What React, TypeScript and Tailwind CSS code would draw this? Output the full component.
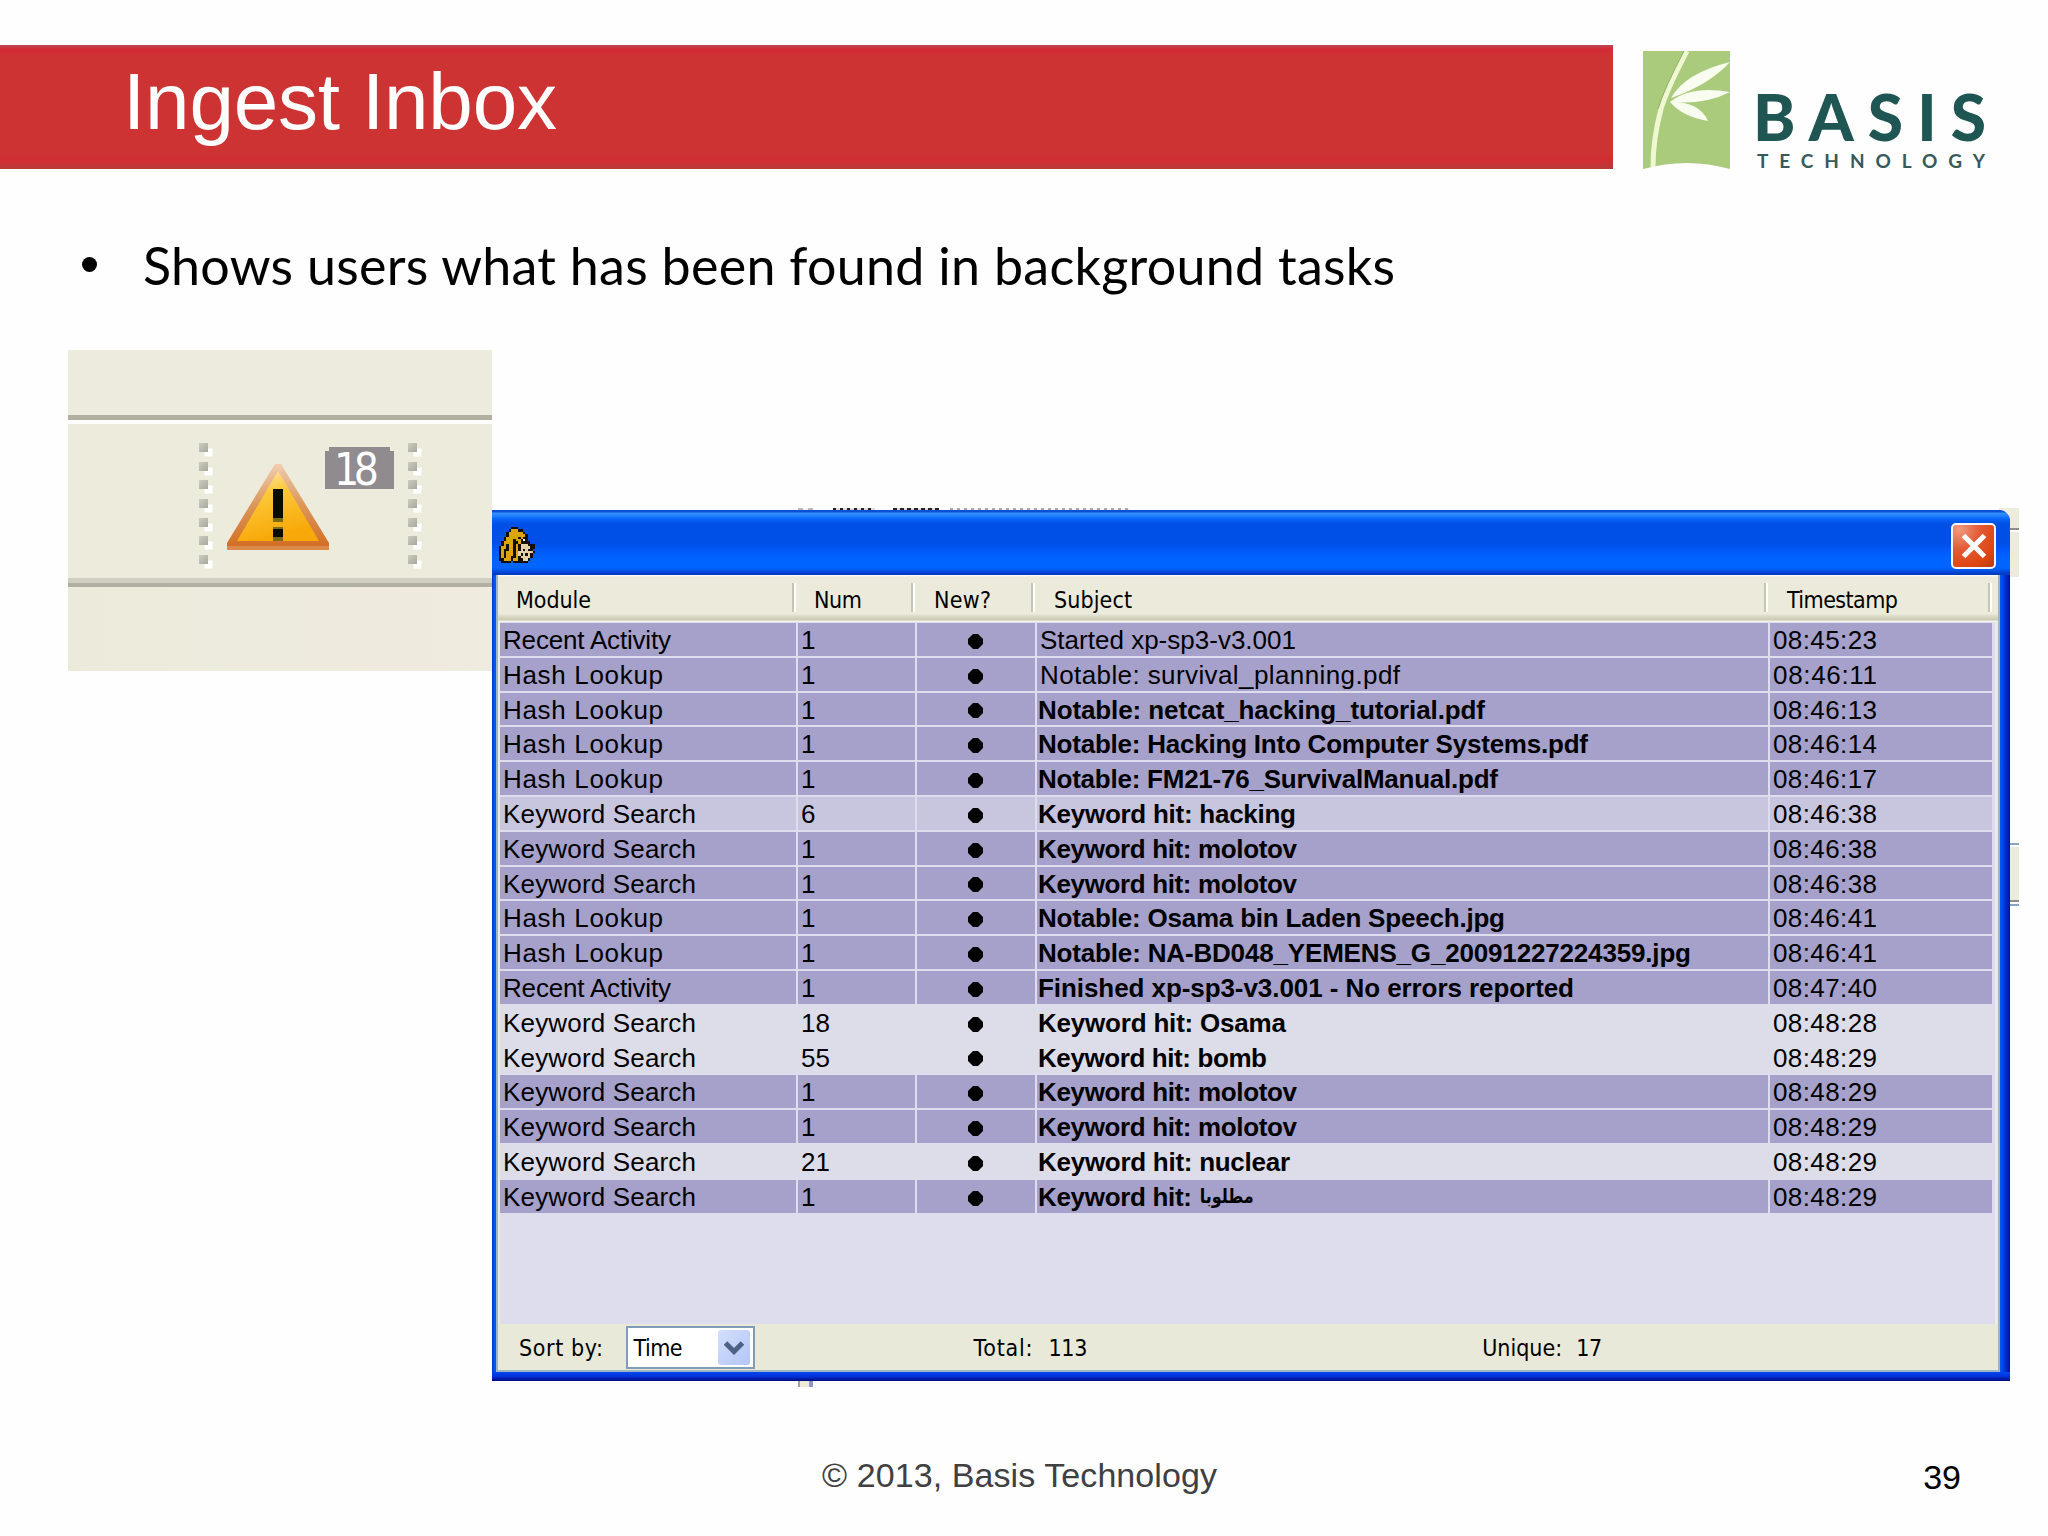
import { useLayoutEffect, useRef, useState } from "react";
import clsx from "clsx";

type Shade = "dark" | "mid" | "light";

interface Message {
  module: string;
  num: number;
  subject: string;
  width: number;
  time: string;
  shade: Shade;
  read?: boolean;
  arabic?: string;
}

const messages: Message[] = [
  { module: "Recent Activity", num: 1, subject: "Started xp-sp3-v3.001", width: 256, time: "08:45:23", shade: "dark", read: true },
  { module: "Hash Lookup", num: 1, subject: "Notable: survival_planning.pdf", width: 360, time: "08:46:11", shade: "dark", read: true },
  { module: "Hash Lookup", num: 1, subject: "Notable: netcat_hacking_tutorial.pdf", width: 447, time: "08:46:13", shade: "dark" },
  { module: "Hash Lookup", num: 1, subject: "Notable: Hacking Into Computer Systems.pdf", width: 550, time: "08:46:14", shade: "dark" },
  { module: "Hash Lookup", num: 1, subject: "Notable: FM21-76_SurvivalManual.pdf", width: 460, time: "08:46:17", shade: "dark" },
  { module: "Keyword Search", num: 6, subject: "Keyword hit: hacking", width: 258, time: "08:46:38", shade: "mid" },
  { module: "Keyword Search", num: 1, subject: "Keyword hit: molotov", width: 259, time: "08:46:38", shade: "dark" },
  { module: "Keyword Search", num: 1, subject: "Keyword hit: molotov", width: 259, time: "08:46:38", shade: "dark" },
  { module: "Hash Lookup", num: 1, subject: "Notable: Osama bin Laden Speech.jpg", width: 467, time: "08:46:41", shade: "dark" },
  { module: "Hash Lookup", num: 1, subject: "Notable: NA-BD048_YEMENS_G_20091227224359.jpg", width: 653, time: "08:46:41", shade: "dark" },
  { module: "Recent Activity", num: 1, subject: "Finished xp-sp3-v3.001 - No errors reported", width: 536, time: "08:47:40", shade: "dark" },
  { module: "Keyword Search", num: 18, subject: "Keyword hit: Osama", width: 248, time: "08:48:28", shade: "light" },
  { module: "Keyword Search", num: 55, subject: "Keyword hit: bomb", width: 229, time: "08:48:29", shade: "light" },
  { module: "Keyword Search", num: 1, subject: "Keyword hit: molotov", width: 259, time: "08:48:29", shade: "dark" },
  { module: "Keyword Search", num: 1, subject: "Keyword hit: molotov", width: 259, time: "08:48:29", shade: "dark" },
  { module: "Keyword Search", num: 21, subject: "Keyword hit: nuclear", width: 252, time: "08:48:29", shade: "light" },
  { module: "Keyword Search", num: 1, subject: "Keyword hit:", width: 154, time: "08:48:29", shade: "dark", arabic: "مطلوبا" },
];

const moduleWidths: Record<string, number> = {
  "Recent Activity": 168,
  "Hash Lookup": 160,
  "Keyword Search": 193,
};

const shades: Record<Shade, string> = {
  dark: "bg-[#a5a1cb]",
  mid: "bg-[#c8c6df]",
  light: "bg-[#dddde9]",
};

const columns = [
  { label: "Module", width: 75, pad: "pl-[16px]" },
  { label: "Num", width: 48, pad: "pl-[16px]" },
  { label: "New?", width: 57, pad: "pl-[17px]" },
  { label: "Subject", width: 78, pad: "pl-[17px]" },
  { label: "Timestamp", width: 111, pad: "pl-[17px]" },
];

// Spreads the letters so that the text takes exactly the given width.
function FitText({ text, width, className }: { text: string; width: number; className?: string }) {
  const ref = useRef<HTMLSpanElement>(null);
  const [spacing, setSpacing] = useState(0);

  useLayoutEffect(() => {
    if (ref.current && text.length > 1) {
      ref.current.style.letterSpacing = "0px";
      const natural = ref.current.getBoundingClientRect().width;
      const next = (width - natural) / (text.length - 1);
      ref.current.style.letterSpacing = `${next}px`;
      setSpacing(next);
    }
  }, [text, width]);

  return (
    <span ref={ref} className={clsx("inline-block whitespace-pre", className)} style={{ letterSpacing: `${spacing}px` }}>
      {text}
    </span>
  );
}

function BambooMark() {
  return (
    <svg width="88" height="118" viewBox="0 0 88 118" className="block">
      <path d="M0 0H87V118Q44 106 0 118Z" fill="#abcb7c" />
      <path d="M44 0Q24 38 18 58Q10 88 10 116" fill="none" stroke="#eef8d2" strokeWidth="5" />
      <path d="M41 0Q21 38 15 58" fill="none" stroke="#8fb268" strokeWidth="1" />
      <path d="M28 47Q42 22 87 11Q66 34 28 47Z" fill="#f8fdf0" />
      <path d="M27 51Q48 34 87 41Q62 54 27 51Z" fill="#f8fdf0" />
      <path d="M27 51Q56 50 65 70Q40 66 27 51Z" fill="#f8fdf0" />
    </svg>
  );
}

function Logo() {
  return (
    <div className="flex pl-[30px] pt-[6px]">
      <BambooMark />
      <div className="flex flex-col items-start pl-[22px] pt-[36px] font-['Lato']">
        <FitText text="BASIS" width={233} className="h-[63px] shrink-0 text-[64px] leading-[60px] font-black text-[#1f5552]" />
        <FitText text="TECHNOLOGY" width={228} className="ml-[4px] h-[22px] shrink-0 text-[19px] leading-[22px] font-bold text-[#38595b]" />
      </div>
    </div>
  );
}

function DragHandle() {
  return (
    <div className="flex w-[14px] flex-col gap-[9.7px]">
      {Array.from({ length: 7 }, (_, i) => (
        <div key={i} className="h-[9px] w-[9px] bg-gradient-to-br from-[#ccccc2] to-[#a9a89c] shadow-[5px_5px_0_-0.5px_#fff]" />
      ))}
    </div>
  );
}

function WarningIcon() {
  return (
    <svg width="104" height="92" viewBox="0 0 104 92" className="block">
      <defs>
        <linearGradient id="warn" x1="0" y1="0" x2="0.3" y2="1">
          <stop offset="0" stopColor="#fdeac0" />
          <stop offset="0.4" stopColor="#fcc838" />
          <stop offset="1" stopColor="#f8a808" />
        </linearGradient>
        <linearGradient id="warnEdge" x1="0" y1="0" x2="0" y2="1">
          <stop offset="0" stopColor="#f0cdb0" />
          <stop offset="0.45" stopColor="#dc9a5c" />
          <stop offset="1" stopColor="#d36a20" />
        </linearGradient>
      </defs>
      <path d="M49 3H55L103 82V89H1V82Z" fill="url(#warnEdge)" />
      <path d="M52 10L93 80H11Z" fill="url(#warn)" />
      <path d="M1 85H103V89H1Z" fill="#dc8a4c" />
      <path d="M47 28H57V57H47ZM47 67H57V76H47Z" fill="#0b0a05" />
      <path d="M47 57H57V61H47ZM47 66H57V68H47ZM47 76H57V80H47Z" fill="#7c6a10" />
    </svg>
  );
}

function ToolbarPanel() {
  return (
    <div className="flex h-[321px] w-[424px] shrink-0 flex-col bg-[#ecebdc]">
      <div className="h-[65px] bg-[#ecebdd]" />
      <div className="h-[5px] bg-[#b0afa1]" />
      <div className="h-[4px] bg-white" />
      <div className="flex h-[154px] pt-[19px] pl-[131px]">
        <DragHandle />
        <div className="ml-[13px] w-[104px] shrink-0 pt-[18px]">
          <WarningIcon />
        </div>
        <div className="-ml-[5px] mt-[4px] h-[42px] w-[69px] shrink-0">
          <div className="mx-[4px] h-[4px] bg-[#8f8b8e]" />
          <div className="h-[38px] bg-[#8f8b8e] pl-[9px]">
            <FitText text="18" width={45} className="-mt-[1px] h-[38px] font-['DejaVu_Sans_Condensed','DejaVu_Sans'] text-[44px] leading-[40px] text-white" />
          </div>
        </div>
        <div className="ml-[14px]">
          <DragHandle />
        </div>
      </div>
      <div className="h-[5px] bg-[#cfcec0]" />
      <div className="h-[4px] bg-[#b0afa1]" />
      <div className="flex-1 bg-gradient-to-r from-[#ecebdb] to-[#efebdf]" />
    </div>
  );
}

const dogPixels = [
  ".....###.......",
  "....#yyy##.....",
  "...#yyyyyy#....",
  "...#yyyyyyy#...",
  "..#yyyyy#y##...",
  "..#yyy#yy#w#...",
  ".#yyyy##y####..",
  ".#y#yy#y#ccc###",
  "#yy#yy#y#cccc##",
  "#y##yy#y#c#c##.",
  "#y#yyy#ycccccc#",
  "#y#yyy#yc#c#c#.",
  "#y#yy##y#cccc#.",
  "##yyy#yy##cc#..",
  ".####.######...",
];

const dogColors: Record<string, string> = { "#": "#140f08", y: "#dca50c", c: "#e6d2a8", w: "#ffffff" };

function DogIcon() {
  return (
    <svg width="36" height="36" viewBox="0 0 15 15" shapeRendering="crispEdges">
      {dogPixels.flatMap((line, y) =>
        line.split("").map((c, x) => (c === "." ? null : <rect key={`${x}-${y}`} x={x} y={y} width="1.02" height="1.02" fill={dogColors[c]} />)),
      )}
    </svg>
  );
}

function TitleBar() {
  return (
    <div className="flex h-[65px] justify-between rounded-tr-[11px] bg-[linear-gradient(to_bottom,#0a4fd6_0,#0a4fd6_2px,#3591ff_3px,#2a86ff_5px,#0564f6_9px,#0050e6_14px,#0050e8_34px,#005cfa_42px,#0066ff_52px,#0064ff_58px,#0046d8_62px,#0238b8_65px)] pr-[14px] pl-[7px]">
      <div className="pt-[17px]">
        <DogIcon />
      </div>
      <div className="mt-[13px] flex h-[46px] w-[45px] items-center justify-center rounded-[5px] border-[2.5px] border-[#f4f6ff] bg-[radial-gradient(circle_at_15%_10%,#f09a80_0,#e35a35_40%,#dd4610_75%,#b83a10_100%)]">
        <svg width="28" height="28" viewBox="0 0 28 28">
          <path d="M3.500 3.500L24.500 24.500M24.500 3.500L3.500 24.500" stroke="#fff" strokeWidth="5" />
        </svg>
      </div>
    </div>
  );
}

function TableHeader() {
  return (
    <div className="grid h-[47px] grid-cols-[298px_119px_120px_733px_224px] bg-[linear-gradient(to_bottom,#ffffff_0,#ebeadb_2px,#ebeadb_39px,#dddcc8_41px,#cbc9b0_45px,#f2f1ea_46px)] pl-[2px] font-['DejaVu_Sans_Condensed','DejaVu_Sans'] text-[23px] leading-[29px]">
      {columns.map((column) => (
        <div key={column.label} className={clsx("flex justify-between pt-[8px]", column.pad)}>
          <FitText text={column.label} width={column.width} className="mt-[3px]" />
          <div className="mr-[2px] h-[29px] w-[4px] border-r-2 border-l-2 border-r-white border-l-[#c6c4b2]" />
        </div>
      ))}
    </div>
  );
}

function MessageRow({ message }: { message: Message }) {
  const cell = clsx("overflow-hidden border-r-2 whitespace-pre", shades[message.shade], message.shade === "light" ? "border-[#dddde9]" : "border-[#dddded]");

  return (
    <div className="grid h-[34.8px] grid-cols-[298px_119px_120px_733px_224px] border-b-2 border-[#dddded]">
      <div className={clsx(cell, "pl-[3px]")}>
        <FitText text={message.module} width={moduleWidths[message.module]} />
      </div>
      <div className={clsx(cell, "pl-[3px]")}>{message.num}</div>
      <div className={clsx(cell, "flex items-center pl-[51px]")}>
        <svg width="15" height="15" viewBox="0 0 15 15" className="mt-[4px]">
          <path d="M5 0H10L15 5V10L10 15H5L0 10V5Z" fill="#000" />
        </svg>
      </div>
      <div className={clsx(cell, "flex", message.read ? "pl-[3px]" : "pl-px font-bold")}>
        <FitText text={message.subject} width={message.width} />
        {message.arabic ? (
          <span className="ml-[8px] scale-y-125 font-['DejaVu_Sans'] text-[16px]" dir="rtl">
            {message.arabic}
          </span>
        ) : null}
      </div>
      <div className={clsx(cell, "pl-[3px]")}>
        <FitText text={message.time} width={104} />
      </div>
    </div>
  );
}

function StatusBar() {
  return (
    <div className="flex h-[46px] items-start bg-[#e8e9d8] pl-[21px] font-['DejaVu_Sans_Condensed','DejaVu_Sans'] text-[23px] leading-[48px]">
      <FitText text="Sort by:" width={84} />
      <div className="mt-[2px] ml-[22px] flex h-[43px] w-[129px] justify-between border-2 border-[#7f9db9] bg-white pr-[3px] pl-[6px] leading-[40px]">
        <FitText text="Time" width={49} />
        <div className="mt-[2px] flex h-[35px] w-[32px] items-center justify-center rounded-[3px] bg-gradient-to-br from-[#d3dffd] to-[#b3c6f4]">
          <svg width="20" height="14" viewBox="0 0 20 14">
            <path d="M1.500 2L10 10.500L18.500 2" fill="none" stroke="#4d6185" strokeWidth="5" />
          </svg>
        </div>
      </div>
      <FitText text="Total:" width={59} className="ml-[219px]" />
      <FitText text="113" width={39} className="ml-[15px]" />
      <FitText text="Unique:" width={80} className="ml-[395px]" />
      <FitText text="17" width={26} className="ml-[14px]" />
    </div>
  );
}

// Slivers of the application that stick out from behind the inbox window.
function BackgroundSlivers() {
  return (
    <>
      <div className="absolute -top-[2px] left-[306px] h-[2px] w-[16px] bg-[repeating-linear-gradient(to_right,#bbb_0,#bbb_5px,#f4f4f4_5px,#f4f4f4_10px)]" />
      <div className="absolute -top-[2px] left-[341px] h-[2px] w-[42px] bg-[repeating-linear-gradient(to_right,#222_0,#222_3px,#ddd_3px,#ddd_7px)]" />
      <div className="absolute -top-[2px] left-[401px] h-[2px] w-[46px] bg-[repeating-linear-gradient(to_right,#222_0,#222_4px,#ddd_4px,#ddd_7px)]" />
      <div className="absolute -top-[2px] left-[458px] h-[2px] w-[180px] bg-[repeating-linear-gradient(to_right,#aaa_0,#aaa_3px,#f4f4f4_3px,#f4f4f4_7px)]" />
      <div className="absolute -top-[2px] left-[1507px] h-[69px] w-[20px] bg-[#ecebdc]">
        <div className="h-[20px]" />
        <div className="h-[2px] bg-[#8f8e88]" />
        <div className="h-[2px] bg-white" />
      </div>
      <div className="absolute top-[333px] left-[1518px] h-[63px] w-[9px] border-t-2 border-b-2 border-[#8ba3c4] bg-[#ecebdc]">
        <div className="h-[2px] bg-white" />
        <div className="mt-[53px] h-[2px] bg-[#8f8e88]" />
        <div className="h-[2px] bg-white" />
      </div>
      <div className="absolute top-[871px] left-[306px] h-[6px] w-[15px] border-r-4 border-l-2 border-r-[#8f96c8] border-l-[#9aa3b4] bg-[#ecebdc]" />
    </>
  );
}

function InboxWindow() {
  return (
    <div className="relative mt-[160px] h-[871px] w-[1518px]">
      <BackgroundSlivers />
      <div className="relative flex h-full flex-col rounded-tr-[12px] bg-[linear-gradient(to_right,#0030c0_0,#0058f0_2px,#0058f0_1509px,#0038e0_1512px,#0010a0_1518px)]">
        <TitleBar />
        <div className="mr-[10px] ml-[4px] flex flex-1 flex-col border-r-2 border-b-2 border-l-2 border-[#9db4c4] bg-[#ecebdc] text-black">
          <TableHeader />
          <div className="mr-[3px] ml-[2px] h-[702px] bg-[#dddded] pt-px font-['Liberation_Sans'] text-[26px] leading-[34px]">
            {messages.map((message, i) => (
              <MessageRow key={i} message={message} />
            ))}
          </div>
          <StatusBar />
        </div>
        <div className="h-[9px] bg-gradient-to-b from-[#0048f0] via-[#0030d8] to-[#000880]" />
      </div>
    </div>
  );
}

export default function App() {
  return (
    <main className="flex h-[1536px] w-[2048px] flex-col overflow-hidden bg-[#fefefe] font-['Liberation_Sans']">
      <header className="flex h-[169px] shrink-0 pt-[45px]">
        <div className="h-[124px] w-[1613px] bg-[linear-gradient(to_bottom,#b84a50_0,#d42a35_4px,#cd3333_12px,#cd3333_108px,#d02e32_116px,#b83a3a_124px)] pl-[123px]">
          <h1 className="text-[80px] leading-[114px] text-white">
            <FitText text="Ingest Inbox" width={434} />
          </h1>
        </div>
        <Logo />
      </header>
      <section className="flex h-[181px] shrink-0 items-start pt-[64px] pl-[82px] font-['Lato'] text-[52px] leading-[64px] text-black">
        <div className="mt-[24px] mr-[46px] h-[15px] w-[15px] rounded-full bg-black" />
        <FitText text="Shows users what has been found in background tasks" width={1252} />
      </section>
      <section className="flex items-start pl-[68px]">
        <ToolbarPanel />
        <InboxWindow />
      </section>
      <footer className="flex justify-between pt-[72px] pr-[87px] pl-[822px] text-[34px] leading-[44px] text-[#404043]">
        <FitText text="© 2013, Basis Technology" width={395} />
        <span className="mt-[2px] text-black">39</span>
      </footer>
    </main>
  );
}
